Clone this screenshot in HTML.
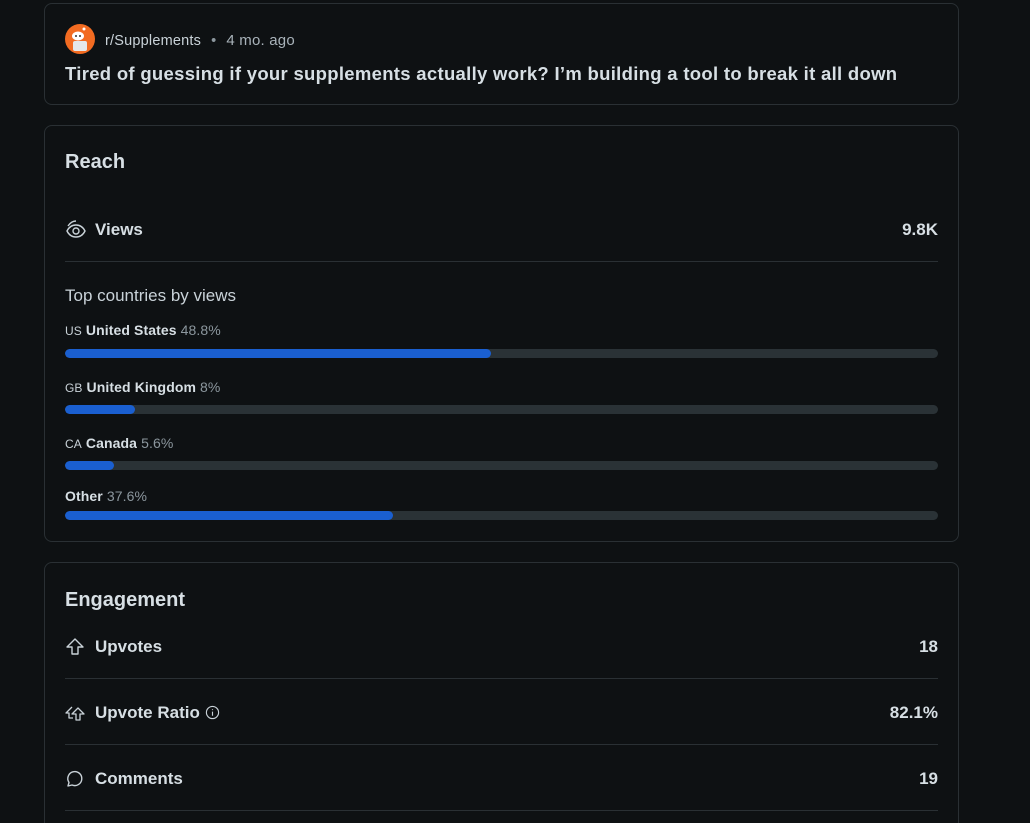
<!DOCTYPE html>
<html style="overflow:hidden"><head><style>
*{margin:0;padding:0;box-sizing:border-box}
html,body{width:1030px;height:823px;overflow:hidden}
body{background:#0e1113;font-family:"Liberation Sans",sans-serif;color:#d7dfe4;position:relative}
.card{position:absolute;left:44px;width:915px;border:1px solid #2a3034;border-radius:8px;background:#0e1113}
.abs{position:absolute}
.t{font-weight:bold}
.line{position:absolute;left:20px;right:20px;height:1px;background:#2a3034}
.track{position:absolute;left:20px;width:873px;height:9px;border-radius:5px;background:#2a3236;overflow:hidden}
.fill{height:100%;background:#1a5fd0;border-radius:5px}
.lbl{position:absolute;left:20px;font-size:14px;color:#c9d2d8;letter-spacing:0.1px}
.lbl b{color:#d7dfe4}
.lbl small{font-size:12px;color:#c9d2d8}
.lbl span{color:#8c979e}
.row{position:absolute;left:20px;right:20px;font-size:17px;font-weight:bold}
.row .v{position:absolute;right:0;top:0}
.row svg{position:absolute;left:0}
.row .n{position:absolute;left:30px}
</style></head><body>
<div class="card" style="top:3px;height:102px">
  <svg class="abs" style="left:20px;top:20px" width="30" height="30" viewBox="0 0 30 30"><circle cx="15" cy="15" r="15" fill="#f26b21"/><ellipse cx="13" cy="12" rx="6" ry="4.5" fill="#fff"/><rect x="8" y="17" width="14" height="10" rx="2" fill="#e5e8ea"/><circle cx="11" cy="12" r="1" fill="#333"/><circle cx="15" cy="12" r="1" fill="#333"/><circle cx="19" cy="5" r="1.5" fill="#fff"/></svg>
  <div class="abs" style="left:60px;top:28px;font-size:14.5px;color:#c9d2d8;letter-spacing:0.2px">r/Supplements<span style="color:#8c979e;margin:0 10px">•</span><span style="color:#a9b3ba;font-size:15px">4 mo. ago</span></div>
  <div class="abs" style="left:20px;top:59px;font-size:18.5px;font-weight:bold;color:#d7dfe4;letter-spacing:0.3px">Tired of guessing if your supplements actually work? I’m building a tool to break it all down</div>
</div>
<div class="card" style="top:125px;height:417px">
  <div class="abs t" style="left:20px;top:25px;font-size:20px">Reach</div>
  <div class="row" style="top:94px">
    <svg width="22" height="20" viewBox="0 0 22 20" fill="none" stroke="#c9d2d8" stroke-width="1.4" style="top:0"><path d="M2 11c2-4 5-6 9-6s7 2 9 6c-2 4-5 6-9 6s-7-2-9-6z"/><circle cx="11" cy="11" r="3"/><path d="M3 6c2-3 5-5 8-5"/></svg>
    <span class="n">Views</span><span class="v">9.8K</span>
  </div>
  <div class="line" style="top:135px"></div>
  <div class="abs" style="left:20px;top:160px;font-size:17px;color:#c9d2d8">Top countries by views</div>
  <div class="lbl" style="top:196px"><small>US</small> <b>United States</b> <span>48.8%</span></div>
  <div class="track" style="top:223px"><div class="fill" style="width:48.8%"></div></div>
  <div class="lbl" style="top:253px"><small>GB</small> <b>United Kingdom</b> <span>8%</span></div>
  <div class="track" style="top:279px"><div class="fill" style="width:8%"></div></div>
  <div class="lbl" style="top:309px"><small>CA</small> <b>Canada</b> <span>5.6%</span></div>
  <div class="track" style="top:335px"><div class="fill" style="width:5.6%"></div></div>
  <div class="lbl" style="top:362px"><b>Other</b> <span>37.6%</span></div>
  <div class="track" style="top:385px"><div class="fill" style="width:37.6%"></div></div>
</div>
<div class="card" style="top:562px;height:300px">
  <div class="abs t" style="left:20px;top:26px;font-size:20px">Engagement</div>
  <div class="row" style="top:74px">
    <svg width="20" height="20" viewBox="0 0 20 20" fill="none" stroke="#c9d2d8" stroke-width="1.4" style="top:0"><path d="M10 2L2 10h5v7h6v-7h5z" stroke-linejoin="round"/></svg>
    <span class="n">Upvotes</span><span class="v">18</span>
  </div>
  <div class="line" style="top:115px"></div>
  <div class="row" style="top:140px">
    <svg width="22" height="20" viewBox="0 0 22 20" fill="none" stroke="#c9d2d8" stroke-width="1.3" style="top:0"><path d="M7 4L1 10h3v5h4" stroke-linejoin="round"/><path d="M13 5L7 11h4v6h4v-6h4z" stroke-linejoin="round"/></svg>
    <span class="n">Upvote Ratio <svg width="15" height="15" viewBox="0 0 16 16" style="position:relative;left:0;top:-1px;vertical-align:middle" fill="none" stroke="#c9d2d8" stroke-width="1.2"><circle cx="8" cy="8" r="6.5"/><path d="M8 7v4.5M8 4.5v1"/></svg></span><span class="v">82.1%</span>
  </div>
  <div class="line" style="top:181px"></div>
  <div class="row" style="top:206px">
    <svg width="20" height="20" viewBox="0 0 20 20" fill="none" stroke="#c9d2d8" stroke-width="1.4" style="top:0"><path d="M3 17l1-3.5A7 7 0 1 1 7 16z" stroke-linejoin="round"/></svg>
    <span class="n">Comments</span><span class="v">19</span>
  </div>
  <div class="line" style="top:247px"></div>
</div>
</body></html>
